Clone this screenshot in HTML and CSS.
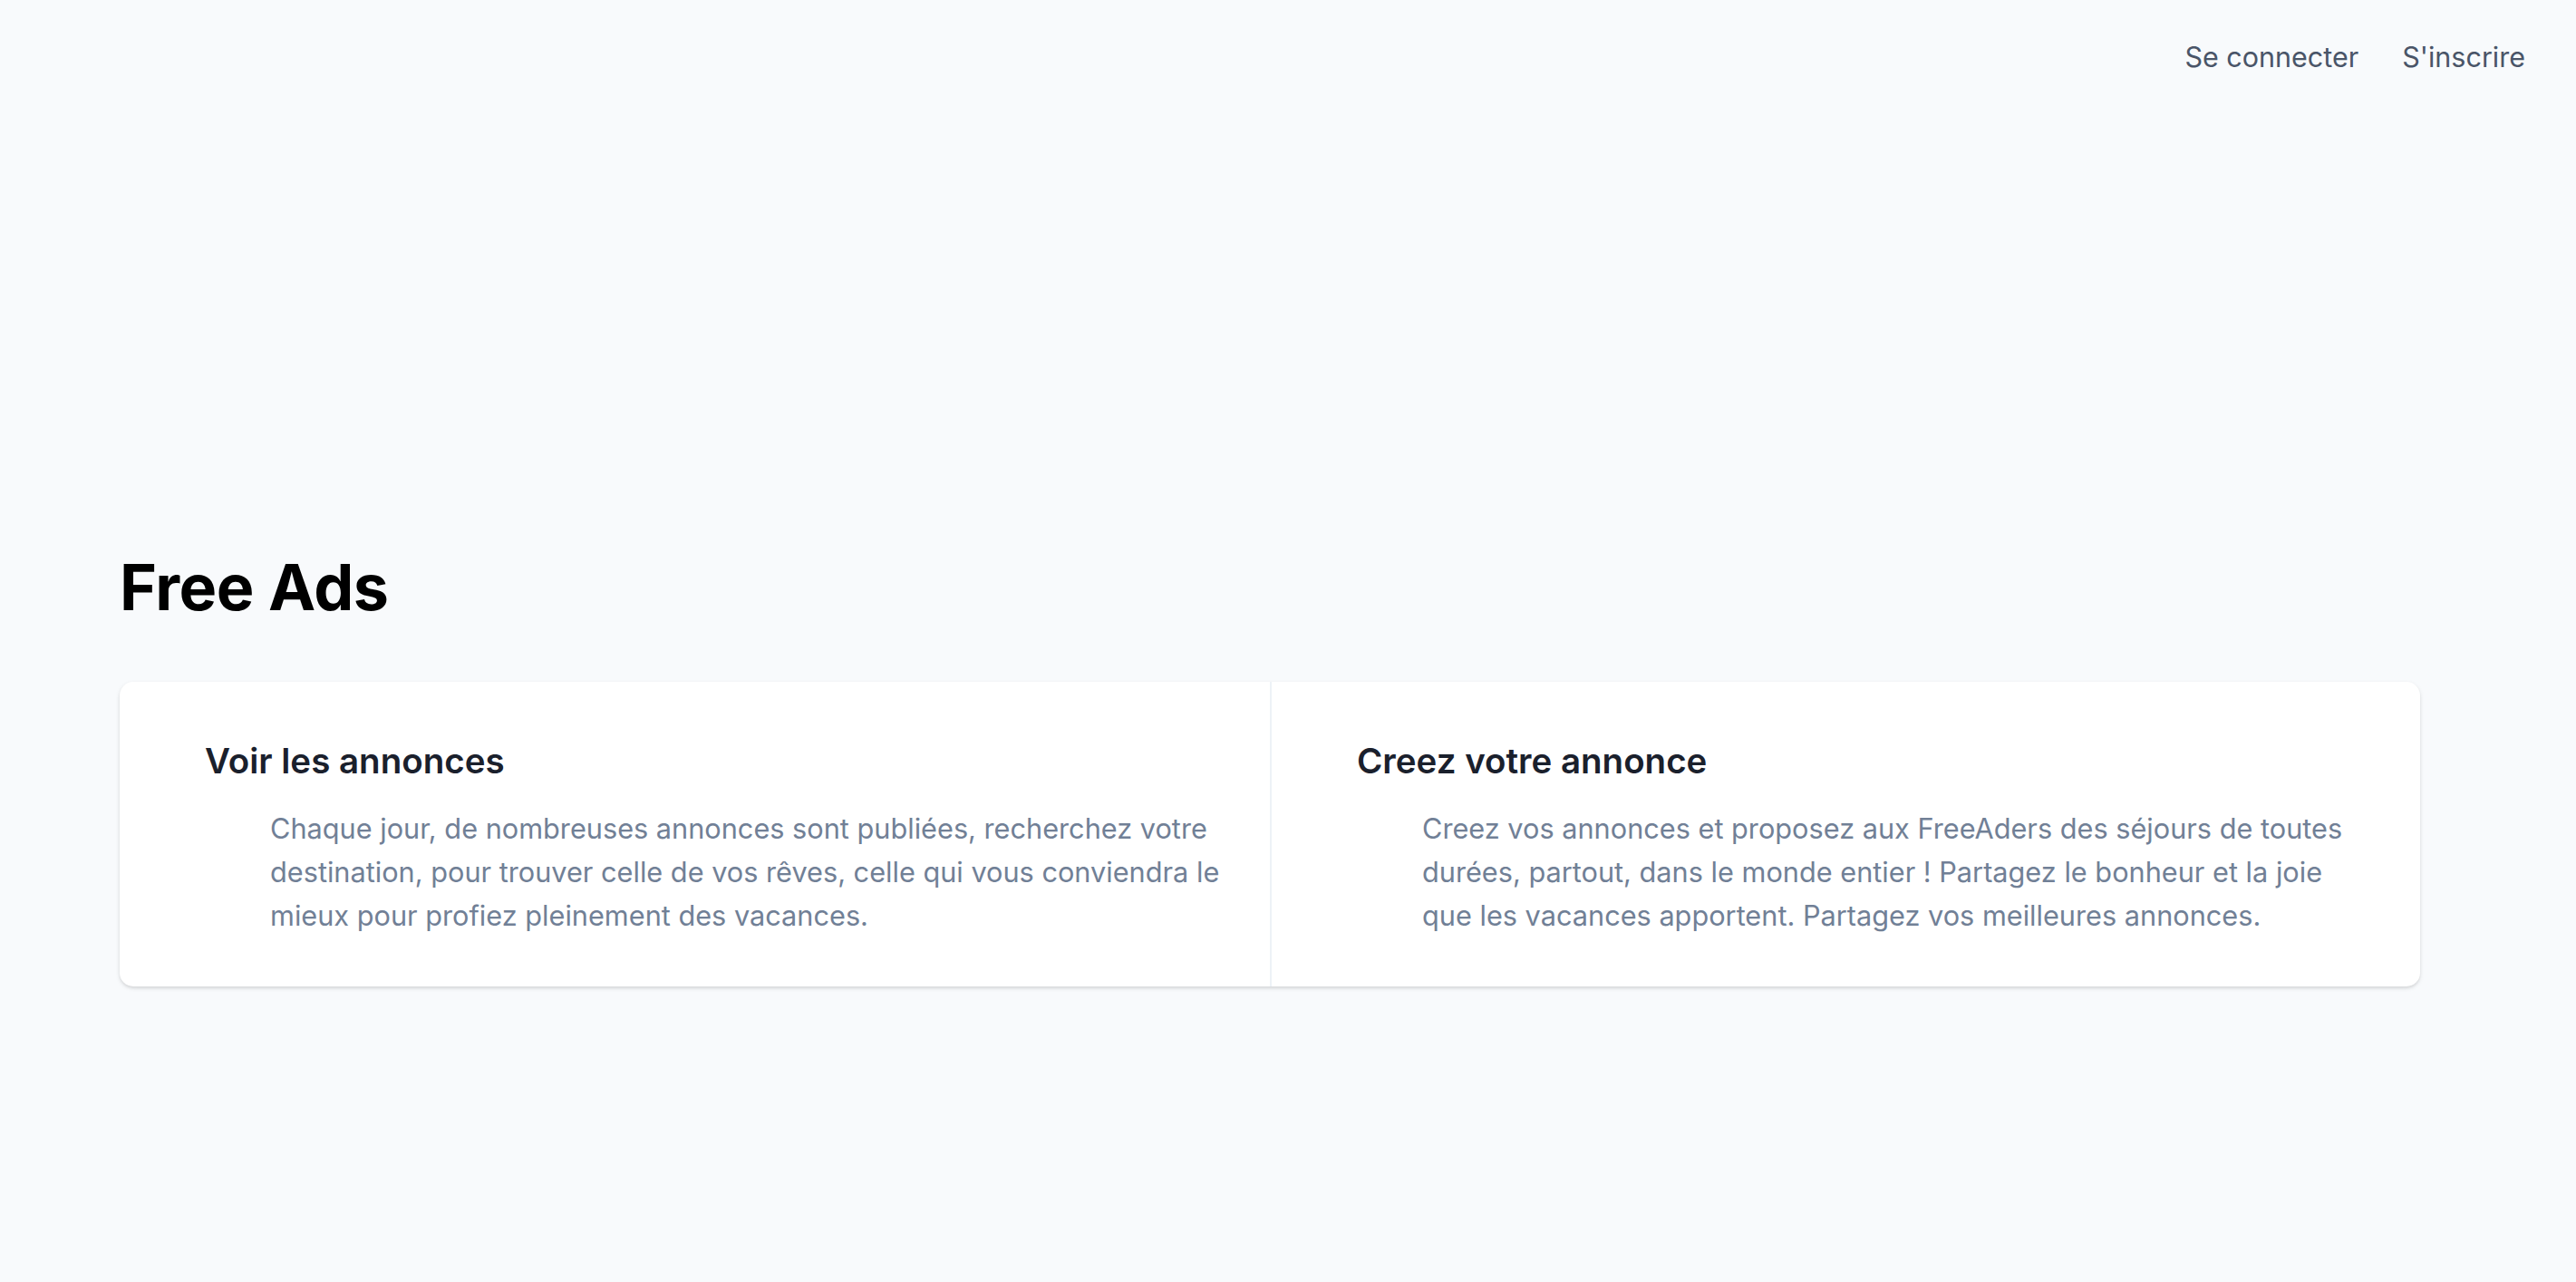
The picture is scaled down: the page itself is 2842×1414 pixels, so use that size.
FILE: index.html
```html
<!DOCTYPE html>
<html lang="fr">
<head>
<meta charset="utf-8">
<title>Free Ads</title>
<link rel="stylesheet" href="styles.css">
</head>
<body>
<header class="topnav">
  <a class="navlink" href="#">Se connecter</a>
  <a class="navlink" href="#">S'inscrire</a>
</header>
<main class="container">
  <h1 class="title">Free Ads</h1>
  <section class="card">
    <div class="col">
      <h2 class="col-title">Voir les annonces</h2>
      <p class="col-text">Chaque jour, de nombreuses annonces sont publiées, recherchez votre destination, pour trouver celle de vos rêves, celle qui vous conviendra le mieux pour profiez pleinement des vacances.</p>
    </div>
    <div class="col col-right">
      <h2 class="col-title">Creez votre annonce</h2>
      <p class="col-text">Creez vos annonces et proposez aux FreeAders des séjours de toutes durées, partout, dans le monde entier ! Partagez le bonheur et la joie que les vacances apportent. Partagez vos meilleures annonces.</p>
    </div>
  </section>
</main>
</body>
</html>
```
FILE: styles.css
```css
html, body {
  margin: 0;
  padding: 0;
}
body {
  background: #f8fafc;
  font-family: Inter, "Noto Sans", sans-serif;
  min-height: 1414px;
}
.topnav {
  display: flex;
  justify-content: flex-end;
  gap: 48px;
  padding: 40px 56px 0 0;
}
.navlink {
  font-size: 30.5px;
  line-height: 45px;
  color: #4a5568;
  text-decoration: none;
}
.container {
  padding: 0 172px 0 132px;
  margin-top: 521px;
}
.title {
  margin: 0 0 62px;
  font-size: 70px;
  line-height: 84px;
  font-weight: 700;
  letter-spacing: -0.5px;
  color: #000;
}
.card {
  display: grid;
  grid-template-columns: 1fr 1fr;
  background: #fff;
  border-radius: 15px;
  box-shadow: 0 2px 5px rgba(0,0,0,0.1), 0 2px 3px rgba(0,0,0,0.06);
  overflow: hidden;
}
.col {
  padding: 60px 50px 54px 94px;
}
.col-right {
  border-left: 2px solid #edf2f7;
}
.col-title {
  margin: 0;
  font-size: 38.5px;
  line-height: 54px;
  font-weight: 600;
  color: #1a202c;
}
.col-text {
  margin: 24px 0 0 72px;
  font-size: 30.7px;
  line-height: 48px;
  color: #718096;
}
```
